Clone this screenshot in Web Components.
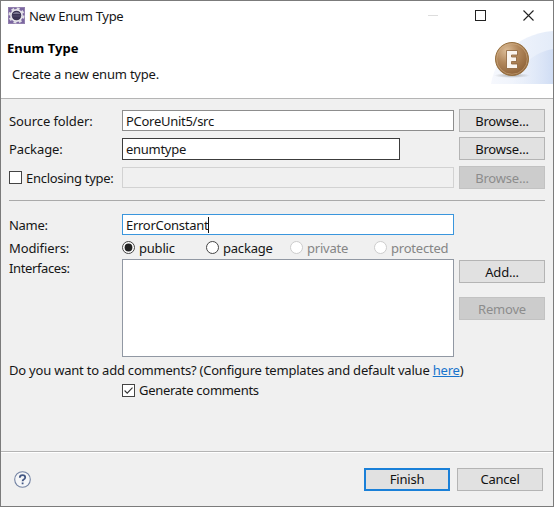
<!DOCTYPE html>
<html lang="en">
<head>
<meta charset="utf-8">
<title>New Enum Type</title>
<style>
  html,body{margin:0;padding:0;height:100%;overflow:hidden;background:#f0f0f0}
  body{font:13px/18px 'Noto Sans','Open Sans',sans-serif;letter-spacing:-.21px;color:#161616}
</style>
</head>
<body>
<enum-dialog></enum-dialog>
<script>
  // small helper: every element gets its own open shadow root
  function define(name, render) {
    if (customElements.get(name)) return;
    customElements.define(name, class extends HTMLElement {
      connectedCallback() {
        if (this.shadowRoot) return;
        this.attachShadow({ mode: 'open' }).innerHTML = '<style>*{box-sizing:border-box}:host{box-sizing:border-box}</style>' + render(this);
      }
    });
  }

  define('ui-button', () => `
    <style>
      :host{display:flex;align-items:center;justify-content:center;width:86px;height:23px;background:#e1e1e1;border:1px solid #b4b4b4;color:#111;white-space:nowrap}
      :host([disabled]){background:#ccc;border-color:#c2c2c2;color:#8c8c8c}
      :host([primary]){border:2px solid #1a80d8}
    </style>
    <span><slot></slot></span>`);

  define('ui-field', () => `
    <style>
      :host{display:flex;align-items:center;height:21px;background:#fff;border:1px solid #8d8d8d;padding-left:3px;letter-spacing:-.28px;white-space:nowrap}
      :host([dark]){width:278px;height:22px;border-color:#3c3c3c}
      :host([disabled]){background:#f0f0f0;border-color:#d2d2d2}
      :host([focused]){border-color:#3a96dd}
      i{display:none;width:1px;height:16px;background:#111}
      :host([focused]) i{display:block}
    </style>
    <slot></slot><i></i>`);

  define('ui-check', el => `
    <style>
      :host{display:flex;align-items:center;gap:4px;letter-spacing:-.29px;white-space:nowrap}
      svg{display:block;flex:none}
    </style>
    <svg width="13" height="13" viewBox="0 0 13 13" fill="none"><rect x=".5" y=".5" width="12" height="12" fill="#fff" stroke="#444"/>${el.hasAttribute('checked') ? '<path d="M2.6 6.5L5.2 9.1L10.5 3.7" stroke="#333" stroke-width="1.1"/>' : ''}</svg>
    <span><slot></slot></span>`);

  define('ui-radio', el => `
    <style>
      :host{display:flex;flex:none;align-items:center;gap:4px;width:84px;white-space:nowrap}
      :host([disabled]){color:#858585}
      svg{display:block;flex:none}
    </style>
    <svg width="13" height="13" viewBox="0 0 13 13"><circle cx="6.5" cy="6.5" r="6" fill="#fff" stroke="${el.hasAttribute('disabled') ? '#ccc' : '#444'}"/>${el.hasAttribute('checked') ? '<circle cx="6.5" cy="6.5" r="3.9" fill="#222"/>' : ''}</svg>
    <span><slot></slot></span>`);

  define('title-bar', () => `
    <style>
      :host{display:flex;align-items:center;height:29px;padding:0 19px 0 7px;background:#fff}
      .name{margin-left:4px;flex:1;letter-spacing:-.3px}
      svg{display:block}
      .ctl{display:flex;align-items:center;gap:37px}
    </style>
    <svg width="17" height="17" viewBox="0 0 17 17">
      <rect width="17" height="17" fill="#7b67a0"/>
      <rect x=".5" y=".5" width="16" height="16" fill="none" stroke="#927fae"/>
      <circle cx="8.5" cy="8.5" r="7" fill="none" stroke="#e2e0e6" stroke-width="2" stroke-dasharray="2.9 2.6"/>
      <circle cx="8.5" cy="8.5" r="5.6" fill="#3b3553" stroke="#e8e6ec" stroke-width="1.6"/>
      <path d="M4.4 7Q8.5 3.2 12.6 7Z" fill="#7c7891"/>
      <path d="M4 9H13" stroke="#554f70"/>
    </svg>
    <span class="name"><slot></slot></span>
    <div class="ctl">
      <svg width="10" height="11" viewBox="0 0 10 11"><path d="M0 5.5H10" stroke="#ddd"/></svg>
      <svg width="11" height="11" viewBox="0 0 11 11"><rect x=".5" y=".5" width="10" height="10" fill="none" stroke="#222"/></svg>
      <svg width="11" height="11" viewBox="0 0 11 11"><path d="M.5 .5L10.5 10.5M10.5 .5L.5 10.5" stroke="#222" stroke-width="1.1"/></svg>
    </div>`);

  define('wizard-header', () => `
    <style>
      :host{display:flex;justify-content:space-between;height:69px;background:#fff;border-bottom:1px solid #b4b4b4}
      h1{margin:8px 0 0 6px;font-size:13px;line-height:20px;font-weight:700;letter-spacing:.08px;color:#000}
      p{margin:7px 0 0 11px;line-height:18px}
      svg{display:block}
    </style>
    <div><h1><slot name="title"></slot></h1><p><slot></slot></p></div>
    <svg width="62" height="68" viewBox="0 0 62 68">
      <defs>
        <linearGradient id="a" x1="0" x2="1"><stop offset="0" stop-color="#f6f8fd"/><stop offset="1" stop-color="#e4ecf9"/></linearGradient>
        <linearGradient id="b" x1="0" x2="1"><stop offset="0" stop-color="#edf2fb" stop-opacity=".3"/><stop offset="1" stop-color="#d0ddf4"/></linearGradient>
        <radialGradient id="c" cx=".34" cy=".25" r=".8"><stop offset="0" stop-color="#dcbd98"/><stop offset=".45" stop-color="#b2885c"/><stop offset="1" stop-color="#8c6036"/></radialGradient>
        <radialGradient id="d"><stop offset="0" stop-color="#888" stop-opacity=".65"/><stop offset="1" stop-color="#888" stop-opacity="0"/></radialGradient>
      </defs>
      <path d="M0 54C4 28 26 4 62 1V54Z" fill="url(#a)"/>
      <path d="M22 54C28 35 44 22 62 19V54Z" fill="url(#b)"/>
      <ellipse cx="21" cy="45.5" rx="18" ry="2.5" fill="url(#d)"/>
      <circle cx="21" cy="29" r="16.5" fill="url(#c)" stroke="#96703f"/>
      <circle cx="21" cy="29" r="15.3" fill="none" stroke="#d2b28b" stroke-width=".8" opacity=".7"/>
      <path d="M15.5 20.5H26.5V25H20.5V27H25.5V31.5H20.5V34H26.5V38.5H15.5Z" fill="#faf5ef" stroke="#8a6138" stroke-width=".8"/>
    </svg>`);

  define('enum-form', () => `
    <style>
      :host{display:block;height:352px;padding:10px 8px 0;background:#f0f0f0}
      .row{display:grid;grid-template-columns:113px 332px 86px;align-items:center;height:23px;margin-bottom:5px;white-space:nowrap}
      .row ui-button{margin-left:5px}
      .row > span{letter-spacing:-.1px}
      .pkg{margin-bottom:6px}
      hr{margin:11px 0 13px;border:0;height:1px;background:#aaa}
      .name{height:21px;margin-bottom:3px}
      .row.name > span{letter-spacing:-.3px}
      .mods{height:19px;margin-bottom:2px}
      .radios{display:flex}
      .ifc{height:98px;align-items:start;margin-bottom:4px}
      .row.ifc > span{letter-spacing:-.38px}
      .list{height:98px;background:#fff;border:1px solid #9198a3}
      .ifc ui-button{margin-top:1px;margin-bottom:14px}
      .note{height:18px;white-space:nowrap}
      a{color:#1874cd;text-decoration:underline}
      .gen{margin:2px 0 0 113px}
    </style>
    <div class="row"><span>Source folder:</span><ui-field>PCoreUnit5/src</ui-field><ui-button>Browse...</ui-button></div>
    <div class="row pkg"><span>Package:</span><ui-field dark>enumtype</ui-field><ui-button>Browse...</ui-button></div>
    <div class="row"><ui-check>Enclosing type:</ui-check><ui-field disabled></ui-field><ui-button disabled>Browse...</ui-button></div>
    <hr>
    <div class="row name"><span>Name:</span><ui-field focused>ErrorConstant</ui-field></div>
    <div class="row mods"><span>Modifiers:</span><div class="radios"><ui-radio checked>public</ui-radio><ui-radio>package</ui-radio><ui-radio disabled>private</ui-radio><ui-radio disabled>protected</ui-radio></div></div>
    <div class="row ifc"><span>Interfaces:</span><div class="list"></div><div><ui-button>Add...</ui-button><ui-button disabled>Remove</ui-button></div></div>
    <div class="note">Do you want to add comments? (Configure templates and default value <a>here</a>)</div>
    <ui-check class="gen" checked>Generate comments</ui-check>`);

  define('dialog-footer', () => `
    <style>
      :host{display:flex;align-items:center;flex:1;padding:0 10px 0 13px;background:#f0f0f0;border-top:1px solid #b4b4b4;box-shadow:inset 0 1px #fff}
      svg{display:block;margin-right:auto}
      .btns{display:flex;gap:7px}
    </style>
    <svg width="17" height="17" viewBox="0 0 17 17" fill="none"><circle cx="8.5" cy="8.5" r="7.8" fill="#f5f6f8" stroke="#7383a3" stroke-width="1.1"/><path d="M5.8 6.7Q5.8 4.2 8.5 4.2T11.2 6.5Q11.2 7.7 9.7 8.5Q8.6 9.1 8.6 10.3M8.6 11.5V13.2" stroke="#435784" stroke-width="1.8"/></svg>
    <div class="btns"><ui-button primary>Finish</ui-button><ui-button>Cancel</ui-button></div>`);

  define('enum-dialog', () => `
    <style>
      :host{display:flex;flex-direction:column;width:554px;height:507px;border:1px solid #7b7b7b}
    </style>
    <title-bar>New Enum Type</title-bar>
    <wizard-header><span slot="title">Enum Type</span>Create a new enum type.</wizard-header>
    <enum-form></enum-form>
    <dialog-footer></dialog-footer>`);
</script>
</body>
</html>
